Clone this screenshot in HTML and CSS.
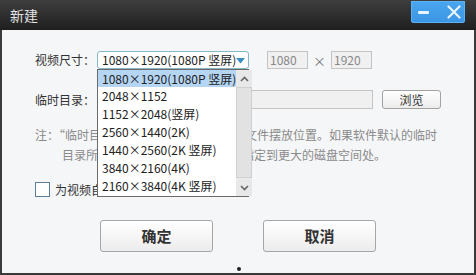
FILE: index.html
```html
<!DOCTYPE html>
<html lang="zh-CN">
<head>
<meta charset="utf-8">
<title>新建</title>
<link rel="stylesheet" href="styles.css">
</head>
<body>
<div class="window">
  <div class="titlebar">
    <span class="title">新建</span>
    <div class="controls">
      <span class="ctl-min"></span>
      <svg class="ctl-close" width="14" height="14" viewBox="0 0 14 14"><path d="M1.5 1.5 L12.5 12.5 M12.5 1.5 L1.5 12.5" stroke="#e8f4ff" stroke-width="2.2" stroke-linecap="round"/></svg>
    </div>
  </div>
  <div class="content">
    <div class="row row-size">
      <span class="label">视频尺寸：</span>
      <div class="select">
        <span class="select-text">1080×1920(1080P 竖屏)</span>
        <svg class="select-arrow" width="9" height="6" viewBox="0 0 9 6"><path d="M0 0 H9 L4.5 5.5 Z" fill="#3a8fc2"/></svg>
        <div class="dropdown">
          <ul class="options">
            <li class="opt selected">1080×1920(1080P 竖屏)</li>
            <li class="opt">2048×1152</li>
            <li class="opt">1152×2048(竖屏)</li>
            <li class="opt">2560×1440(2K)</li>
            <li class="opt">1440×2560(2K 竖屏)</li>
            <li class="opt">3840×2160(4K)</li>
            <li class="opt">2160×3840(4K 竖屏)</li>
          </ul>
          <div class="scrollbar">
            <div class="sb-btn"><svg width="9" height="6" viewBox="0 0 9 6"><path d="M1 5 L4.5 1.5 L8 5" fill="none" stroke="#666" stroke-width="1.6"/></svg></div>
            <div class="sb-thumb"></div>
            <div class="sb-btn"><svg width="9" height="6" viewBox="0 0 9 6"><path d="M1 1 L4.5 4.5 L8 1" fill="none" stroke="#666" stroke-width="1.6"/></svg></div>
          </div>
        </div>
      </div>
      <span class="field field-num">1080</span>
      <span class="times">×</span>
      <span class="field field-num">1920</span>
    </div>
    <div class="row row-dir">
      <span class="label">临时目录：</span>
      <span class="field field-dir"></span>
      <span class="btn-browse">浏览</span>
    </div>
    <p class="note">注：“临时目录”是软件编辑视频的临时文件摆放位置。如果软件默认的临时<br>目录所在磁盘空间不足，建议将其指定到更大的磁盘空间处。</p>
    <div class="row row-check">
      <span class="checkbox"></span>
      <span class="check-label">为视频自动添加片头片尾</span>
    </div>
    <div class="actions">
      <span class="btn">确定</span>
      <span class="btn">取消</span>
    </div>
    <div class="dot"></div>
  </div>
</div>
</body>
</html>
```

FILE: styles.css
```css
html, body {
  margin: 0;
  padding: 0;
}
body {
  font-family: "Noto Sans CJK SC", "Liberation Sans", sans-serif;
  font-size: 12px;
  color: #333;
}
.window {
  width: 476px;
  height: 275px;
  box-sizing: border-box;
  background: #3a3a3a;
  padding: 0 2px 2px;
  display: flex;
  flex-direction: column;
}
.titlebar {
  height: 30px;
  margin: 0 -2px;
  background: linear-gradient(#3e3e3e, #1f1f1f);
  display: flex;
  align-items: flex-start;
  justify-content: space-between;
  flex: none;
}
.title {
  color: #e2e2e2;
  font-size: 14px;
  line-height: 30px;
  margin-left: 10px;
}
.controls {
  margin: 1px 11px 0 0;
  width: 54px;
  height: 22px;
  border-radius: 0 0 3px 3px;
  background: linear-gradient(#4aa6f0, #3b95e4);
  display: flex;
  align-items: center;
  box-shadow: inset 0 0 0 1px #5bb3f5;
}
.ctl-min {
  width: 11px;
  height: 3px;
  background: #e8f4ff;
  margin-left: 7px;
  border-radius: 1px;
}
.ctl-close {
  margin-left: 18px;
}
.content {
  flex: 1;
  background: #f5f6f8;
  padding: 21px 0 0 33px;
  display: flex;
  flex-direction: column;
}
.row {
  display: flex;
  align-items: center;
}
.label {
  width: 62px;
  flex: none;
  line-height: 18px;
}
.row-size {
  height: 18px;
}
.select {
  position: relative;
  width: 152px;
  height: 18px;
  box-sizing: border-box;
  border: 1px solid #86b7c9;
  border-radius: 3px;
  background: #fff;
  display: flex;
  align-items: center;
  padding-left: 4px;
}
.select-text {
  color: #222;
  white-space: nowrap;
  line-height: 16px;
}
.select-arrow {
  position: absolute;
  right: 3px;
  top: 6px;
}
.dropdown {
  position: absolute;
  left: -1px;
  top: 17px;
  width: 152px;
  height: 128px;
  box-sizing: border-box;
  border: 1px solid #6a6a6a;
  background: #fff;
  display: flex;
  z-index: 5;
}
.options {
  list-style: none;
  margin: 0;
  padding: 0;
  flex: 1;
}
.opt {
  height: 18px;
  line-height: 18px;
  padding-left: 4px;
  color: #222;
  white-space: nowrap;
}
.opt.selected {
  background: #b5d5f4;
  height: 17px;
  line-height: 17px;
}
.scrollbar {
  width: 16px;
  flex: none;
  display: flex;
  flex-direction: column;
  background: #ececec;
}
.sb-btn {
  height: 17px;
  display: flex;
  align-items: center;
  justify-content: center;
  background: #e8e8e8;
}
.sb-thumb {
  flex: 1;
  background: #e2e2e2;
  border: 1px solid #cfcfcf;
  margin: 0 0 1px;
}
.field {
  box-sizing: border-box;
  height: 18px;
  background: #f0f0f0;
  border: 1px solid #c4c4c4;
  color: #888;
  line-height: 16px;
  padding-left: 2px;
}
.field-num {
  width: 41px;
  margin-left: 0;
}
.row-size .select + .field {
  margin-left: 18px;
}
.times {
  width: 23px;
  text-align: center;
  color: #777;
  font-size: 13px;
}
.row-dir {
  margin-top: 21px;
  height: 19px;
}
.field-dir {
  width: 276px;
  height: 19px;
}
.btn-browse {
  margin-left: 9px;
  width: 59px;
  height: 19px;
  box-sizing: border-box;
  border: 1px solid #a2a2a2;
  border-radius: 3px;
  background: linear-gradient(#ffffff, #ececec);
  text-align: center;
  line-height: 17px;
  color: #333;
}
.note {
  margin: 16px 0 0;
  width: 420px;
  color: #8a8a8a;
  line-height: 20px;
  padding-left: 27px;
  text-indent: -27px;
  white-space: nowrap;
}
.row-check {
  margin-top: 17px;
  height: 15px;
}
.checkbox {
  width: 15px;
  height: 15px;
  box-sizing: border-box;
  border: 1px solid #5b7d96;
  background: #fff;
}
.check-label {
  margin-left: 5px;
  line-height: 15px;
  color: #333;
}
.actions {
  margin: 23px 0 0 -33px;
  display: flex;
  justify-content: center;
  gap: 50px;
}
.btn {
  width: 113px;
  height: 32px;
  box-sizing: border-box;
  border: 1px solid #a6a6a6;
  border-radius: 3px;
  background: linear-gradient(#ffffff, #ececec);
  text-align: center;
  line-height: 30px;
  font-size: 15px;
  font-weight: bold;
  color: #333;
}
.dot {
  margin: 15px 0 0 202px;
  width: 4px;
  height: 4px;
  border-radius: 2px;
  background: #222;
}
```
